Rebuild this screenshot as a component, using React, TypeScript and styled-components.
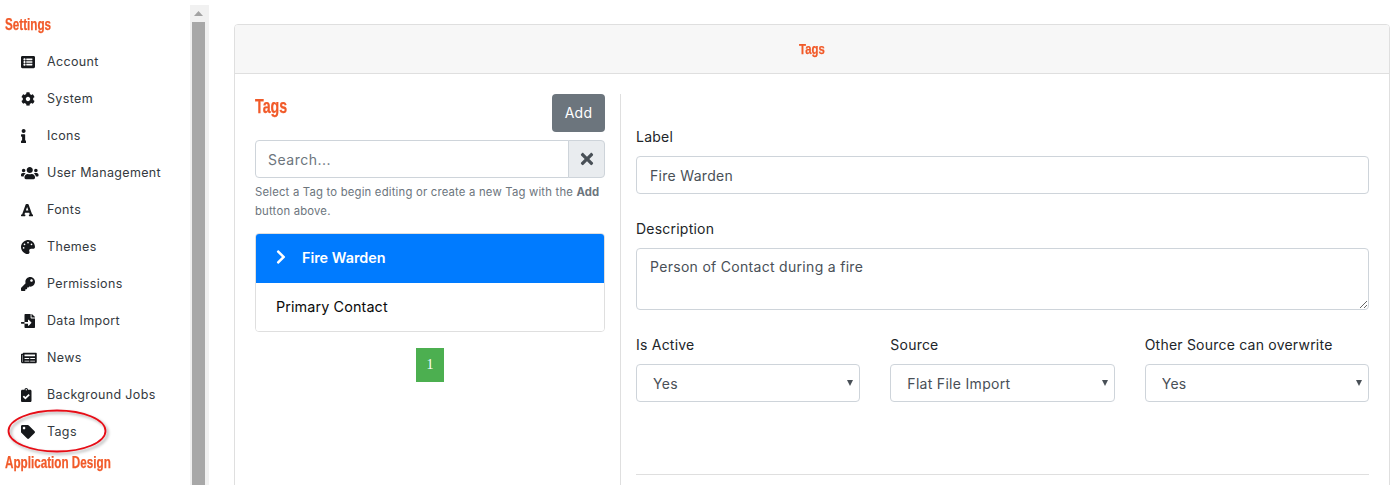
import React from "react";
import styled, { createGlobalStyle } from "styled-components";
import {
  FaListAlt, FaCog, FaInfo, FaUsers, FaFont, FaPalette, FaKey, FaFileImport,
  FaNewspaper, FaClipboardCheck, FaTag, FaTimes, FaChevronRight,
} from "react-icons/fa";

const Global = createGlobalStyle`
  html, body { margin: 0; padding: 0; background: #fff; }
  body { font-family: Inter, "Noto Sans", sans-serif; color: #212529; }
  * { box-sizing: border-box; }
`;

const heading = `"Liberation Sans", sans-serif`;
const orange = "#f15a29";

const Page = styled.div`
  position: relative;
  display: flex;
  width: 1393px;
  height: 485px;
  overflow: hidden;
`;
const Sidebar = styled.aside`
  width: 190px;
  flex: none;
  padding-top: 15px;
`;
const SectionTitle = styled.div`
  font: bold 16px/20px ${heading};
  color: ${orange};
  padding-left: 5px;
  white-space: nowrap;
  -webkit-text-stroke: 0.25px ${orange};
`;
const NarrowText = styled.span`
  display: inline-block;
  transform: scaleX(0.73);
  transform-origin: left center;
`;
const Menu = styled.ul`
  list-style: none;
  margin: 8px 0 0;
  padding: 0;
`;
const MenuItem = styled.li`
  display: flex;
  align-items: center;
  height: 37px;
  padding-left: 21px;
  font-size: 12.5px;
  letter-spacing: 0.35px;
  color: #343a40;
`;
const MenuIcon = styled.span<{ $width: number }>`
  display: flex;
  align-items: center;
  justify-content: flex-start;
  width: 26px;
  flex: none;
  color: #16181b;
  svg { width: ${(p) => p.$width}px; height: 14px; flex: none; }
`;
const AfterMenu = styled(SectionTitle)`
  margin-top: 3px;
`;
const Scrollbar = styled.div`
  width: 19px;
  flex: none;
  margin-top: 5px;
  background: #f1f1f1;
  padding: 0 4px 0 2px;
  display: flex;
  flex-direction: column;
`;
const ScrollArrow = styled.div`
  height: 17px;
  display: flex;
  align-items: center;
  justify-content: center;
  svg { display: block; }
`;
const ScrollThumb = styled.div`
  flex: 1;
  background: #a8a8a8;
`;
const Main = styled.main`
  flex: 1;
  min-width: 0;
  padding: 24px 3px 0 25px;
`;
const Card = styled.section`
  border: 1px solid #dfdfdf;
  border-radius: 4px;
  height: 600px;
`;
const CardHeader = styled.header`
  height: 49px;
  padding-bottom: 2px;
  background: #f7f7f7;
  border-bottom: 1px solid #dfdfdf;
  border-radius: 3px 3px 0 0;
  display: flex;
  align-items: center;
  justify-content: center;
  font: bold 15px ${heading};
  color: ${orange};
  -webkit-text-stroke: 0.25px ${orange};
`;
const HeaderText = styled.span`
  display: inline-block;
  transform: scaleX(0.76);
`;
const CardBody = styled.div`
  display: grid;
  grid-template-columns: 366px 1fr;
  padding: 20px;
`;
const LeftColumn = styled.div`
  padding-right: 15px;
  border-right: 1px solid #dfdfdf;
  height: 500px;
`;
const RightColumn = styled.div`
  padding-left: 15px;
  padding-top: 32px;
`;
const TitleRow = styled.div`
  display: flex;
  justify-content: space-between;
  align-items: flex-start;
  margin-bottom: 8px;
`;
const Title = styled.h2`
  margin: 0;
  font: bold 21px/24px ${heading};
  color: ${orange};
  transform: scaleX(0.68);
  transform-origin: left center;
  -webkit-text-stroke: 0.25px ${orange};
`;
const AddButton = styled.button`
  width: 53px;
  height: 38px;
  border: 0;
  border-radius: 4px;
  background: #6c757d;
  color: #fff;
  font: 14px Inter, sans-serif;
  letter-spacing: 0.3px;
  padding: 0 0 2px;
`;
const SearchGroup = styled.div`
  display: flex;
  height: 38px;
`;
const SearchInput = styled.input`
  flex: 1;
  min-width: 0;
  height: 38px;
  border: 1px solid #ced4da;
  border-radius: 4px 0 0 4px;
  padding: 0 12px;
  font: 14px Inter, sans-serif;
  letter-spacing: 0.5px;
  color: #495057;
  &::placeholder { color: #6c757d; opacity: 1; }
`;
const SearchClear = styled.span`
  width: 37px;
  margin-left: -1px;
  display: flex;
  align-items: center;
  justify-content: center;
  background: #e9ecef;
  border: 1px solid #ced4da;
  border-radius: 0 4px 4px 0;
  color: #495057;
  font-size: 18px;
`;
const Help = styled.p`
  margin: 5px 0 12px;
  font-size: 11.3px;
  line-height: 19px;
  color: #6c757d;
  letter-spacing: 0.2px;
  b { font-weight: 700; }
`;
const TagList = styled.div`
  border: 1px solid #dfdfdf;
  border-radius: 4px;
  overflow: hidden;
  margin-bottom: 16px;
`;
const TagRow = styled.div<{ $active?: boolean }>`
  display: flex;
  align-items: center;
  height: ${(p) => (p.$active ? "50px" : "48px")};
  margin: ${(p) => (p.$active ? "-1px -1px 0" : "0")};
  padding: 0 0 2px ${(p) => (p.$active ? "18px" : "20px")};
  background: ${(p) => (p.$active ? "#007bff" : "#fff")};
  color: ${(p) => (p.$active ? "#fff" : "#0b0b0b")};
  font-size: 14.4px;
  font-weight: ${(p) => (p.$active ? 600 : 400)};
  letter-spacing: ${(p) => (p.$active ? "0" : "0.1px")};
  svg { margin-right: 13px; font-size: 16px; flex: none; }
`;
const Pager = styled.div`
  display: flex;
  justify-content: center;
`;
const PageNumber = styled.span`
  width: 28px;
  height: 34px;
  background: #4caf50;
  color: #fff;
  display: flex;
  align-items: center;
  justify-content: center;
  font: 14px "Liberation Serif", serif;
`;
const Field = styled.div`
  margin-bottom: 24px;
`;
const Label = styled.label`
  display: block;
  font-size: 14px;
  line-height: 21px;
  margin-bottom: 9px;
  letter-spacing: 0.22px;
  color: #212529;
`;
const controlStyle = `
  width: 100%;
  border: 1px solid #ced4da;
  border-radius: 4px;
  background: #fff;
  font: 14px Inter, sans-serif;
  letter-spacing: 0.3px;
  color: #495057;
`;
const TextInput = styled.input`
  ${controlStyle}
  display: block;
  height: 38px;
  padding: 0 13px;
`;
const TextArea = styled.textarea`
  ${controlStyle}
  display: block;
  height: 62px;
  padding: 9px 13px;
`;
const SelectGrid = styled.div`
  display: grid;
  grid-template-columns: repeat(3, 1fr);
  gap: 30px;
`;
const SelectWrap = styled.div`
  position: relative;
`;
const Select = styled.select`
  ${controlStyle}
  appearance: none;
  display: block;
  height: 38px;
  padding: 0 16px;
`;
const SelectArrow = styled.svg`
  position: absolute;
  right: 7px;
  top: 16px;
  pointer-events: none;
`;
const Divider = styled.hr`
  margin: 72px 0 0;
  border: 0;
  border-top: 1px solid #dfdfdf;
`;
const Annotation = styled.svg`
  position: absolute;
  left: 4px;
  top: 406px;
  pointer-events: none;
`;

const items: [React.ReactNode, string, number][] = [
  [<FaListAlt />, "Account", 14],
  [<FaCog />, "System", 14],
  [<FaInfo />, "Icons", 5.25],
  [<FaUsers />, "User Management", 17.5],
  [<FaFont />, "Fonts", 12.25],
  [<FaPalette />, "Themes", 14],
  [<FaKey />, "Permissions", 14],
  [<FaFileImport />, "Data Import", 14],
  [<FaNewspaper />, "News", 15.75],
  [<FaClipboardCheck />, "Background Jobs", 10.5],
  [<FaTag />, "Tags", 14],
];

function SelectField({ label, value }: { label: string; value: string }) {
  return (
    <div>
      <Label>{label}</Label>
      <SelectWrap>
        <Select defaultValue={value}><option>{value}</option></Select>
        <SelectArrow width="6" height="6" viewBox="0 0 6 6"><path d="M0 0h6L3 6z" fill="#495057" /></SelectArrow>
      </SelectWrap>
    </div>
  );
}

export default function App() {
  return (
    <Page>
      <Global />
      <Sidebar>
        <SectionTitle><NarrowText>Settings</NarrowText></SectionTitle>
        <Menu>
          {items.map(([icon, label, width]) => (
            <MenuItem key={label}>
              <MenuIcon $width={width}>{icon}</MenuIcon>
              {label}
            </MenuItem>
          ))}
        </Menu>
        <AfterMenu><NarrowText>Application Design</NarrowText></AfterMenu>
      </Sidebar>
      <Scrollbar>
        <ScrollArrow>
          <svg width="9" height="5" viewBox="0 0 9 5"><path d="M4.5 0 9 5H0z" fill="#a3a3a3" /></svg>
        </ScrollArrow>
        <ScrollThumb />
      </Scrollbar>
      <Main>
        <Card>
          <CardHeader><HeaderText>Tags</HeaderText></CardHeader>
          <CardBody>
            <LeftColumn>
              <TitleRow>
                <Title>Tags</Title>
                <AddButton>Add</AddButton>
              </TitleRow>
              <SearchGroup>
                <SearchInput placeholder="Search..." readOnly />
                <SearchClear><FaTimes /></SearchClear>
              </SearchGroup>
              <Help>
                Select a Tag to begin editing or create a new Tag with the <b>Add</b> button above.
              </Help>
              <TagList>
                <TagRow $active><FaChevronRight />Fire Warden</TagRow>
                <TagRow>Primary Contact</TagRow>
              </TagList>
              <Pager><PageNumber>1</PageNumber></Pager>
            </LeftColumn>
            <RightColumn>
              <Field>
                <Label>Label</Label>
                <TextInput defaultValue="Fire Warden" />
              </Field>
              <Field>
                <Label>Description</Label>
                <TextArea defaultValue="Person of Contact during a fire" />
              </Field>
              <SelectGrid>
                <SelectField label="Is Active" value="Yes" />
                <SelectField label="Source" value="Flat File Import" />
                <SelectField label="Other Source can overwrite" value="Yes" />
              </SelectGrid>
              <Divider />
            </RightColumn>
          </CardBody>
        </Card>
      </Main>
      <Annotation width="110" height="54" viewBox="0 0 110 54">
        <defs>
          <filter id="annotationShadow" x="-10%" y="-10%" width="125%" height="140%">
            <feDropShadow dx="2" dy="2" stdDeviation="1.5" floodColor="#000" floodOpacity="0.35" />
          </filter>
        </defs>
        <ellipse cx="53" cy="25" rx="48.5" ry="20.5" fill="none" stroke="#e60a14" strokeWidth="1.8" filter="url(#annotationShadow)" />
      </Annotation>
    </Page>
  );
}
